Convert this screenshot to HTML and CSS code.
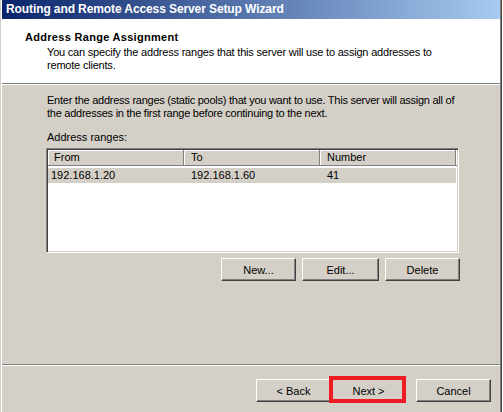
FILE: index.html
```html
<!DOCTYPE html>
<html>
<head>
<meta charset="utf-8">
<title>Routing and Remote Access Server Setup Wizard</title>
<link rel="stylesheet" href="styles.css">
</head>
<body>
<div class="window">
  <div class="titlebar">Routing and Remote Access Server Setup Wizard</div>
  <div class="header">
    <div class="heading">Address Range Assignment</div>
    <div class="subtext">You can specify the address ranges that this server will use to assign addresses to<br>remote clients.</div>
  </div>
  <div class="content">
    <p class="intro">Enter the address ranges (static pools) that you want to use. This server will assign all of<br>the addresses in the first range before continuing to the next.</p>
    <p class="label">Address ranges:</p>
    <div class="listview">
      <div class="lv-header">
        <div class="lv-col col-from">From</div>
        <div class="lv-col">To</div>
        <div class="lv-col">Number</div>
        <div class="lv-filler"></div>
      </div>
      <div class="lv-row">
        <div class="lv-cell cell-from">192.168.1.20</div>
        <div class="lv-cell">192.168.1.60</div>
        <div class="lv-cell">41</div>
      </div>
    </div>
    <div class="list-buttons">
      <button class="btn btn-new">New...</button>
      <button class="btn btn-edit">Edit...</button>
      <button class="btn btn-delete">Delete</button>
    </div>
  </div>
  <div class="footer">
    <button class="btn">&lt; Back</button>
    <button class="btn btn-next">Next &gt;</button>
    <button class="btn btn-cancel">Cancel</button>
  </div>
</div>
</body>
</html>
```
FILE: styles.css
```css
html, body {
  margin: 0;
  padding: 0;
}
body {
  width: 503px;
  height: 412px;
  overflow: hidden;
  background: #ffffff;
  font-family: "Liberation Sans", Arial, sans-serif;
  font-size: 11px;
  color: #000;
}
.window {
  width: 502px;
  height: 412px;
  box-sizing: border-box;
  display: flex;
  flex-direction: column;
  background: #d4d0c8;
  border-left: 1px solid #d4d0c8;
  border-right: 1px solid #404040;
  padding: 0 1px;
  box-shadow: inset 1px 0 #ffffff, inset -1px 0 #808080;
}
.titlebar {
  height: 19px;
  flex: none;
  box-sizing: border-box;
  padding-left: 4px;
  background: linear-gradient(to right, #0a246a, #a6caf0);
  color: #ffffff;
  font-weight: bold;
  font-size: 12px;
  letter-spacing: -0.1px;
  line-height: 19px;
  white-space: nowrap;
}
.header {
  flex: none;
  height: 65px;
  box-sizing: border-box;
  background: #ffffff;
  border-bottom: 1px solid #808080;
  padding: 12px 0 0 23px;
}
.heading {
  font-weight: bold;
  letter-spacing: 0.3px;
  line-height: 13px;
}
.subtext {
  margin: 2px 0 0 22px;
  line-height: 13px;
  letter-spacing: -0.2px;
}
.content {
  flex: 1;
  border-top: 1px solid #ffffff;
  border-bottom: 1px solid #808080;
  padding: 9px 0 0 44px;
}
.content p {
  margin: 0 0 0 1px;
  line-height: 13px;
}
.intro {
  letter-spacing: -0.25px;
}
.label {
  padding-top: 11px;
}
.listview {
  margin-top: 4px;
  width: 413px;
  height: 105px;
  box-sizing: border-box;
  background: #ffffff;
  border: 1px solid;
  border-color: #808080 #ffffff #ffffff #808080;
  box-shadow: inset 1px 1px #404040, inset -1px -1px #d4d0c8;
  padding: 1px;
}
.lv-header {
  display: flex;
  height: 16px;
}
.lv-col {
  width: 136px;
  box-sizing: border-box;
  background: #d4d0c8;
  border-right: 1px solid #808080;
  border-bottom: 1px solid #808080;
  box-shadow: inset 1px 1px #ffffff;
  padding-left: 7px;
  line-height: 15px;
}
.col-from {
  padding-left: 6px;
}
.lv-filler {
  flex: 1;
  background: #d4d0c8;
  border-bottom: 1px solid #808080;
  box-shadow: inset 1px 1px #ffffff;
}
.lv-row {
  display: flex;
  margin-top: 2px;
  width: 408px;
  height: 15px;
  background: #d4d0c8;
}
.lv-cell {
  width: 136px;
  box-sizing: border-box;
  padding-left: 7px;
  line-height: 15px;
}
.cell-from {
  padding-left: 3px;
}
.list-buttons {
  display: flex;
  justify-content: flex-end;
  gap: 6px;
  width: 414px;
  margin-top: 5px;
}
.btn {
  width: 75px;
  height: 23px;
  box-sizing: border-box;
  padding: 0;
  margin: 0;
  background: #d4d0c8;
  font-family: "Liberation Sans", Arial, sans-serif;
  font-size: 11px;
  color: #000;
  border: 1px solid;
  border-color: #ffffff #404040 #404040 #ffffff;
  box-shadow: inset -1px -1px #808080;
  border-radius: 0;
}
.btn-edit {
  width: 77px;
}
.footer {
  flex: none;
  height: 47px;
  box-sizing: border-box;
  border-top: 1px solid #ffffff;
  display: flex;
  justify-content: flex-end;
  align-items: flex-start;
  padding: 13px 9px 0 0;
}
.btn-next {
  position: relative;
}
.btn-next::after {
  content: "";
  position: absolute;
  left: -3px;
  top: -4px;
  right: -1px;
  bottom: -2px;
  border: 4px solid #ed1c24;
}
.btn-cancel {
  margin-left: 10px;
}
```
